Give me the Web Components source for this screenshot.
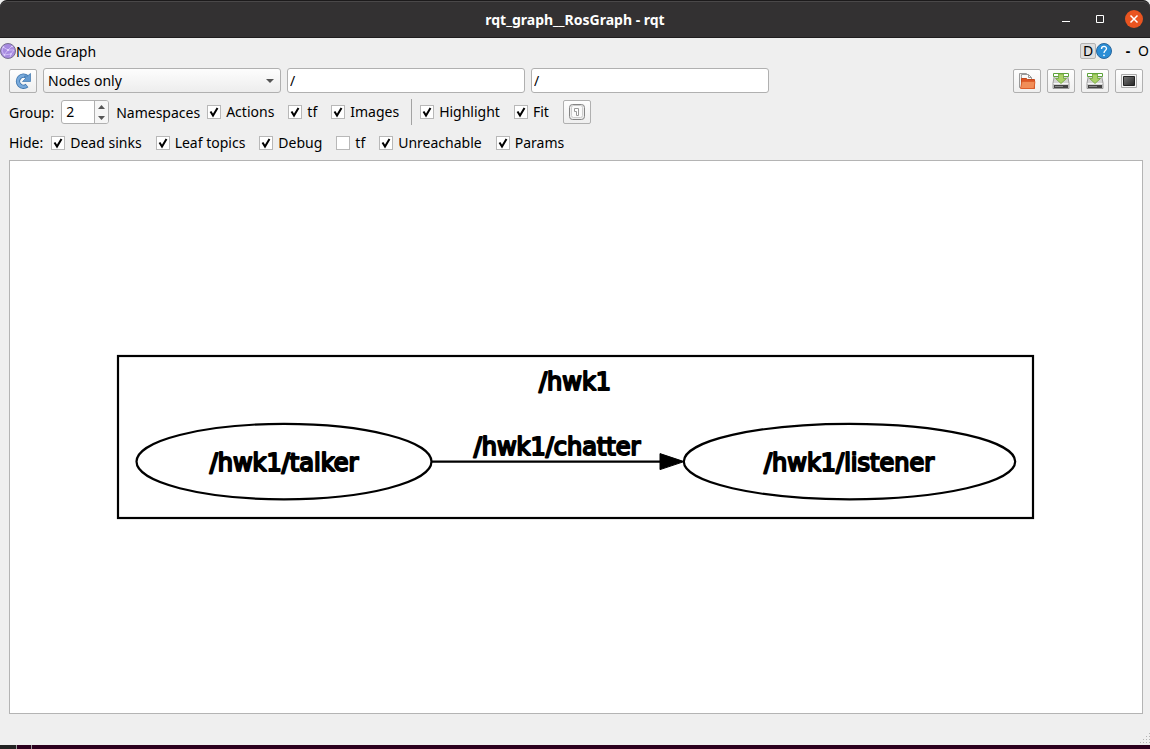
<!DOCTYPE html>
<html lang="en">
<head>
<meta charset="utf-8">
<title>rqt_graph__RosGraph - rqt</title>
<style>
html, body { margin: 0; height: 100%; }
body { font: 14px/20px "Noto Sans", "Open Sans", sans-serif; color: #000; background: #2c001e; overflow: hidden; }
</style>
</head>
<body>
<rqt-window></rqt-window>

<template id="rqt-window">
<style>
:host { display: flex; flex-direction: column; height: 100vh; background: #efefef; }
main { flex: 1; min-height: 0; display: flex; flex-direction: column; padding: 4px 7px 0 9px; }
.row { display: flex; align-items: center; flex: none; }
.top { height: 25px; gap: 6px; }
.group { height: 26px; margin-top: 6px; gap: 14px; }
.hide { height: 20px; margin: 8px 0 7px; gap: 14px; }
.lead { margin-right: -6px; }
.spacer { flex: 1; }
.rule { width: 1px; height: 26px; margin-left: -2px; background: #a3a3a3; }
.rule + * { margin-left: -6px; }
graph-view { flex: 1; min-height: 0; }
footer { flex: none; height: 31px; display: flex; justify-content: flex-end; align-items: flex-end; }
footer svg { display: block; }
.desktop { flex: none; height: 4px; background: linear-gradient(90deg, #222 0 16px, #999 16px 17px, #2c001e 17px 31px, #999 31px 32px, #2c001e 32px); }
</style>
<title-bar>rqt_graph__RosGraph - rqt</title-bar>
<dock-header>Node Graph</dock-header>
<main>
  <div class="row top">
    <tool-button label="Refresh graph"><svg width="18" height="18" viewBox="0 0 18 18"><path d="M13 5A5.500 5.500 0 1 0 13 13.500" fill="none" stroke="#3e75ad" stroke-width="4.400"/><path d="M13 5A5.500 5.500 0 1 0 12.500 13.800" fill="none" stroke="#79aadb" stroke-width="2.800"/><path d="M16.500 1.500v8H8.500l3-3-1-2.500h3z" fill="#659bd1" stroke="#3e75ad" stroke-width=".7"/></svg></tool-button>
    <drop-down label="Graph type">Nodes only</drop-down>
    <filter-box label="Namespace filter"></filter-box>
    <filter-box label="Topic filter"></filter-box>
    <span class="spacer"></span>
    <tool-button label="Load dot graph"><svg width="18" height="18" viewBox="0 0 18 18"><path d="M1.500 1.500h7l2 2v12h-9z" fill="#eee" stroke="#999"/><path d="M3.500 4.500v-2h7l3 3v3h-10z" fill="#fafafa" stroke="#999"/><path d="M10.500 2.500v3h3" fill="none" stroke="#999"/><path d="M3.500 16.500V6.500h5l1 1h7v9z" fill="#dd5525" stroke="#c24a1e"/><path d="M2.500 16.500l1.500-7h13l-1 7z" fill="#f18d58" stroke="#dc5c2a" stroke-width=".8"/></svg></tool-button>
    <tool-button label="Save as DOT"><disk-icon></disk-icon></tool-button>
    <tool-button label="Save as SVG"><disk-icon></disk-icon></tool-button>
    <tool-button label="Save as image"><svg width="18" height="18" viewBox="0 0 18 18"><defs><linearGradient id="m" x2="1" y2="1"><stop stop-color="#777"/><stop offset="1" stop-color="#252525"/></linearGradient></defs><path d="M1.500 2.500h15v13h-15z" fill="#f5f5f5" stroke="#aaa"/><path d="M3.500 4.500h11v9h-11z" fill="url(#m)" stroke="#222"/></svg></tool-button>
  </div>
  <div class="row group">
    <spin-field></spin-field>
    <check-option checked>Actions</check-option>
    <check-option checked>tf</check-option>
    <check-option checked>Images</check-option>
    <span class="rule"></span>
    <check-option checked>Highlight</check-option>
    <check-option checked>Fit</check-option>
    <tool-button label="Fit in view"><svg width="18" height="18" viewBox="0 0 18 18"><rect x="1.500" y="1.500" width="15" height="15" rx="3" fill="#ededed" stroke="#858585"/><rect x="3.500" y="2.500" width="11" height="12" rx="2" fill="#fafafa" stroke="#ccc"/><path d="M6.500 5.500h4v7h-2v-4h-2z" fill="#fff" stroke="#999"/></svg></tool-button>
  </div>
  <div class="row hide">
    <span class="lead">Hide:</span>
    <check-option checked>Dead sinks</check-option>
    <check-option checked>Leaf topics</check-option>
    <check-option checked>Debug</check-option>
    <check-option>tf</check-option>
    <check-option checked>Unreachable</check-option>
    <check-option checked>Params</check-option>
  </div>
  <graph-view></graph-view>
</main>
<footer><svg width="10" height="14" viewBox="0 0 10 14" fill="#b4b4b4"><path d="M9 2h1v1H9zM9 5h1v1H9zM6 5h1v1H6zM9 8h1v1H9zM6 8h1v1H6zM3 8h1v1H3zM9 11h1v1H9zM6 11h1v1H6zM3 11h1v1H3zM0 11h1v1H0z"/></svg></footer>
<div class="desktop"></div>
</template>

<template id="title-bar">
<style>
:host { display: grid; grid-template-columns: 1fr auto 1fr; align-items: center; flex: none; height: 38px; box-sizing: border-box; background: #333132; border-top: 1px solid #1c1a1b; border-bottom: 1px solid #1f1d1e; border-radius: 7px 7px 0 0; box-shadow: inset 0 1px #4a4849; color: #fff; font-weight: 700; font-size: 14px; }
h1 { grid-column: 2; margin: 0; padding-top: 2px; font: inherit; }
nav { display: flex; justify-content: flex-end; gap: 16px; padding-right: 7px; }
button { appearance: none; border: 0; padding: 0; width: 18px; height: 18px; background: none; }
svg { display: block; }
</style>
<h1><slot></slot></h1>
<nav>
<button aria-label="Minimize"><svg width="18" height="18"><path d="M5 11.500h8" stroke="#fff"/></svg></button>
<button aria-label="Maximize"><svg width="18" height="18"><path d="M5.500 5.500h7v7h-7z" fill="none" stroke="#fff"/></svg></button>
<button aria-label="Close"><svg width="18" height="18"><circle cx="9" cy="9" r="9" fill="#e95420"/><path d="M5.500 5.500l7 7m0-7l-7 7" stroke="#fff" stroke-width="1.500"/></svg></button>
</nav>
</template>

<template id="dock-header">
<style>
:host { display: flex; align-items: center; flex: none; height: 26px; overflow: hidden; }
h2 { margin: 0; padding-top: 2px; font: inherit; }
svg { display: block; flex: none; }
.spacer { flex: 1; }
button { appearance: none; flex: none; font: inherit; color: inherit; background: none; border: 0; padding: 0; height: 16px; line-height: 16px; }
.d { width: 16px; box-sizing: border-box; border: 1px solid #b3b3b3; border-radius: 2px; background: #dedede; line-height: 14px; }
.dash { width: 16px; margin-left: 8px; font-weight: 700; }
.o { width: 14px; text-align: left; padding-left: 2px; }
</style>
<svg width="16" height="16" viewBox="0 0 16 16"><circle cx="8" cy="8" r="7.500" fill="#a78be0" stroke="#777090"/><path d="M3 4l5 3 4-4M8 7l-4 5 7-1 3-4-6 0M11 11l-1 3M3 4l-1 4 2 4" fill="none" stroke="#d8c8fa" stroke-width=".8"/><g fill="#e8dcff"><circle cx="3.500" cy="4" r=".8"/><circle cx="8" cy="7" r="1"/><circle cx="12" cy="3.500" r=".8"/><circle cx="4.500" cy="12" r=".8"/><circle cx="11" cy="11" r=".8"/></g></svg>
<h2><slot></slot></h2>
<span class="spacer"></span>
<button class="d">D</button>
<button aria-label="Help"><svg width="16" height="16" viewBox="0 0 16 16"><circle cx="8" cy="8" r="7.500" fill="#2b8ed6" stroke="#2a679c"/><path d="M5.500 6c0-3.500 5-3.300 5-.5C10.500 7.500 8 7.500 8 10" fill="none" stroke="#fff" stroke-width="1.300"/><circle cx="8" cy="12.300" r=".9" fill="#fff"/></svg></button>
<button class="dash">-</button>
<button class="o">O</button>
</template>

<template id="tool-button">
<style>
:host { display: block; flex: none; }
button { appearance: none; display: grid; place-items: center; width: 28px; height: 24px; box-sizing: border-box; padding: 0; border: 1px solid #b0b0b0; border-radius: 2px; background: linear-gradient(#fefefe, #efefef); }
</style>
<button><slot></slot></button>
</template>

<template id="disk-icon">
<style>:host { display: block; } svg { display: block; }</style>
<svg width="18" height="18" viewBox="0 0 18 18"><path d="M2.500 3h13l1.500 8v5.500H1V11z" fill="#d4d4d4" stroke="#888" stroke-width=".8"/><path d="M1.500 1.500h15v3h-15z" fill="#fff" stroke="#5da33a"/><path d="M1.500 11.500h15" stroke="#f6f6f6"/><path d="M2 13h14v3H2z" fill="#444"/><path d="M3 14.500h8" stroke="#888"/><path d="M6.500 2h5v4.500h3l-5.500 5-5.500-5h3z" fill="#a9d166" stroke="#6fa53a" stroke-width=".8"/></svg>
</template>

<template id="drop-down">
<style>
:host { display: grid; align-items: center; flex: 0 1 238px; }
select { grid-area: 1 / 1; appearance: none; width: 100%; height: 25px; box-sizing: border-box; margin: 0; padding: 0 24px 0 4px; border: 1px solid #b0b0b0; border-radius: 3px; background: linear-gradient(#fdfdfd, #ededed); font: inherit; color: inherit; }
svg { grid-area: 1 / 1; justify-self: end; margin-right: 7px; pointer-events: none; }
</style>
<select><option></option></select>
<svg width="8" height="4"><path d="M0 0h8L4 4z" fill="#555"/></svg>
</template>

<template id="filter-box">
<style>
:host { display: block; flex: 0 1 238px; }
input { display: block; width: 100%; height: 25px; box-sizing: border-box; margin: 0; padding: 0 2px; border: 1px solid #b0b0b0; border-radius: 3px; background: #fff; font: inherit; color: inherit; }
</style>
<input type="text" value="/">
</template>

<template id="spin-field">
<style>
:host { display: flex; align-items: center; gap: 7px; margin-right: -7px; }
label, .unit { padding-top: 2px; }
.box { display: flex; width: 48px; height: 24px; box-sizing: border-box; border: 1px solid #b0b0b0; border-radius: 3px; overflow: hidden; background: #fff; }
input { appearance: textfield; flex: 1; min-width: 0; border: 0; margin: 0; padding: 0 4px; font: inherit; color: inherit; background: none; }
input::-webkit-inner-spin-button { display: none; }
.steps { display: flex; flex-direction: column; width: 13px; border-left: 1px solid #b0b0b0; background: #f6f6f6; }
button { appearance: none; flex: 1; display: grid; place-items: center; border: 0; padding: 0; background: none; }
svg { display: block; }
</style>
<label for="level">Group:</label>
<div class="box"><input id="level" type="number" value="2"><span class="steps">
<button aria-label="Increase"><svg width="7" height="4"><path d="M0 4h7L3.500 0z" fill="#555"/></svg></button>
<button aria-label="Decrease"><svg width="7" height="4"><path d="M0 0h7L3.500 4z" fill="#555"/></svg></button></span></div>
<span class="unit">Namespaces</span>
</template>

<template id="check-option">
<style>
:host { display: block; flex: none; }
label { display: flex; align-items: center; gap: 5px; white-space: nowrap; }
.mark { display: grid; }
input { grid-area: 1 / 1; appearance: none; width: 14px; height: 14px; box-sizing: border-box; margin: 0; border: 1px solid #b8b8b8; background: #fff; }
svg { grid-area: 1 / 1; visibility: hidden; pointer-events: none; }
input:checked + svg { visibility: visible; }
</style>
<label><span class="mark"><input type="checkbox"><svg width="14" height="14" viewBox="0 0 14 14"><path d="M3.500 6.500L6 10.500 10.500 3" fill="none" stroke="#000" stroke-width="2"/></svg></span><span><slot></slot></span></label>
</template>

<template id="graph-view">
<style>
:host { display: block; box-sizing: border-box; border: 1px solid #b4b4b4; background: #fff; }
svg { display: block; width: 100%; height: 100%; }
text { font: 24px "DejaVu Sans", sans-serif; text-anchor: middle; fill: #000; stroke: #000; stroke-width: 2; stroke-linejoin: round; }
.line { fill: none; stroke: #000; stroke-width: 2.2; }
</style>
<svg viewBox="0 0 1132 552" role="img" aria-label="Node graph">
<rect class="line" x="108" y="195" width="915" height="162"/>
<text x="565" y="229">/hwk1</text>
<ellipse class="line" cx="274" cy="300.600" rx="147.500" ry="37.700"/>
<text x="274" y="310">/hwk1/talker</text>
<path class="line" d="M422 300.600h230"/>
<path d="M650 292.600l24 8-24 8z" stroke="#000"/>
<text x="547" y="294">/hwk1/chatter</text>
<ellipse class="line" cx="839.500" cy="300.600" rx="165.700" ry="37.700"/>
<text x="839" y="310">/hwk1/listener</text>
</svg>
</template>

<script>
class RqtElement extends HTMLElement {
  constructor() {
    super();
    const template = document.getElementById(this.localName);
    this.attachShadow({ mode: 'open' }).append(template.content.cloneNode(true));
  }
  part$(selector) { return this.shadowRoot.querySelector(selector); }
}
class Labelled extends RqtElement {
  connectedCallback() {
    this.part$('button, input, select').setAttribute('aria-label', this.getAttribute('label'));
  }
}
class DropDown extends Labelled {
  connectedCallback() {
    super.connectedCallback();
    this.part$('option').textContent = this.textContent;
  }
}
class CheckOption extends RqtElement {
  connectedCallback() { this.part$('input').checked = this.hasAttribute('checked'); }
}
class SpinField extends RqtElement {
  connectedCallback() {
    const [up, down] = this.shadowRoot.querySelectorAll('button');
    const input = this.part$('input');
    up.onclick = () => input.stepUp();
    down.onclick = () => input.stepDown();
  }
}
customElements.define('title-bar', class extends RqtElement {});
customElements.define('dock-header', class extends RqtElement {});
customElements.define('disk-icon', class extends RqtElement {});
customElements.define('graph-view', class extends RqtElement {});
customElements.define('tool-button', class extends Labelled {});
customElements.define('filter-box', class extends Labelled {});
customElements.define('drop-down', DropDown);
customElements.define('check-option', CheckOption);
customElements.define('spin-field', SpinField);
customElements.define('rqt-window', class extends RqtElement {});
</script>
</body>
</html>
